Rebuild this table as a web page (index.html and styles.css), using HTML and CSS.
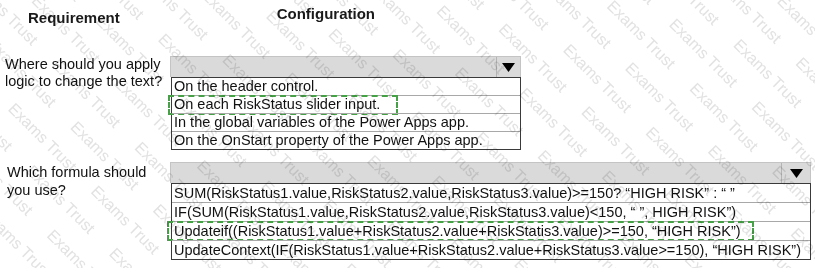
FILE: index.html
```html
<!DOCTYPE html>
<html lang="en">
<head>
<meta charset="utf-8">
<title>Requirement / Configuration</title>
<link rel="stylesheet" href="styles.css">
</head>
<body>
<div class="sheet">
  <div class="head">
    <div class="h-req">Requirement</div>
    <div class="h-conf">Configuration</div>
  </div>

  <div class="q q-first">
    <div class="label label-first">Where should you apply<br>logic to change the text?</div>
    <div class="dd dd-short">
      <div class="dd-bar">
        <span class="dd-btn">
          <svg width="13" height="9" viewBox="0 0 13 9"><polygon points="0,0 13,0 6.5,9" fill="#000"/></svg>
        </span>
      </div>
      <ul class="dd-list">
        <li>On the header control.</li>
        <li class="pick pick-a">On each RiskStatus slider input.</li>
        <li>In the global variables of the Power Apps app.</li>
        <li>On the OnStart property of the Power Apps app.</li>
      </ul>
    </div>
  </div>

  <div class="q q-second">
    <div class="label label-second">Which formula should<br>you use?</div>
    <div class="dd dd-wide">
      <div class="dd-bar">
        <span class="dd-btn dd-btn-wide">
          <svg width="13" height="9" viewBox="0 0 13 9"><polygon points="0,0 13,0 6.5,9" fill="#000"/></svg>
        </span>
      </div>
      <ul class="dd-list dd-list-tall">
        <li>SUM(RiskStatus1.value,RiskStatus2.value,RiskStatus3.value)&gt;=150? “HIGH RISK” : “ ”</li>
        <li>IF(SUM(RiskStatus1.value,RiskStatus2.value,RiskStatus3.value)&lt;150, “ ”, HIGH RISK”)</li>
        <li class="pick pick-b">Updateif((RiskStatus1.value+RiskStatus2.value+RiskStatis3.value)&gt;=150, “HIGH RISK”)</li>
        <li>UpdateContext(IF(RiskStatus1.value+RiskStatus2.value+RiskStatus3.value&gt;=150), “HIGH RISK”)</li>
      </ul>
    </div>
  </div>

  <div class="wm" aria-hidden="true"><div class="wm-inner"></div></div>
</div>
<script src="script.js"></script>
</body>
</html>
```

FILE: styles.css
```css
html, body {
  margin: 0;
  padding: 0;
  background: #fff;
}

.sheet {
  position: relative;
  width: 815px;
  height: 268px;
  overflow: hidden;
  font-family: "Liberation Sans", Arial, sans-serif;
  font-size: 14.5px;
  color: #111;
}

/* column headings */
.head {
  display: flex;
  height: 56px;
  font-weight: bold;
  font-size: 15px;
  line-height: 16px;
  color: #1a1a1a;
}
.h-req {
  margin: 10px 0 0 28px;
}
.h-conf {
  margin: 6px 0 0 157px;
}

/* question rows */
.q {
  display: flex;
  align-items: flex-start;
}
.q-second {
  margin-top: 12px;
}

.label {
  width: 170px;
  flex: none;
}
.label-first {
  line-height: 17px;
  padding-left: 5px;
  width: 165px;
}
.label-second {
  line-height: 18px;
  padding: 1px 0 0 7px;
  width: 163px;
}

/* dropdown */
.dd-short {
  width: 351px;
}
.dd-wide {
  width: 641px;
}

.dd-bar {
  height: 21px;
  box-sizing: border-box;
  background: #dadada;
  border: 1px solid #c4c4c4;
  border-bottom: none;
  display: flex;
  justify-content: flex-end;
}
.dd-btn {
  width: 23px;
  border-left: 1px solid #b4b4b4;
  display: flex;
  align-items: center;
  justify-content: center;
}
.dd-btn-wide {
  width: 28px;
}

.dd-list {
  list-style: none;
  margin: 0 0 0 1px;
  padding: 0;
  border: 1px solid #3a3a3a;
  background: #fff;
}
.dd-list li {
  position: relative;
  height: 17px;
  line-height: 17px;
  padding-left: 2px;
  white-space: nowrap;
  border-top: 1px solid #a8a8a8;
}
.dd-list li:first-child {
  border-top: none;
}
.dd-list-tall li {
  height: 18px;
  line-height: 18px;
}

/* dashed mark around the chosen answer */
.pick::after {
  content: "";
  position: absolute;
  top: -1px;
  box-sizing: border-box;
  border: 2px dashed #46a046;
}
.pick-a::after {
  left: -4px;
  width: 230px;
  height: 20px;
}
.pick-b::after {
  left: -5px;
  width: 587px;
  height: 20px;
}

/* diagonal watermark */
.wm {
  position: absolute;
  inset: 0;
  overflow: hidden;
  pointer-events: none;
  mix-blend-mode: multiply;
}
.wm-inner {
  position: absolute;
  left: -600px;
  top: -700px;
  width: 2000px;
  transform: rotate(45deg);
  transform-origin: center;
  font-family: "Liberation Sans", Arial, sans-serif;
  font-size: 16px;
  color: #e2e2e2;
}
.wm-line {
  height: 31px;
  line-height: 31px;
  white-space: nowrap;
}
.wm-line span {
  margin-right: 28px;
}
```

FILE: script.js
```js
// fills the diagonal watermark with repeated lines of text
(function () {
  var inner = document.querySelector('.wm-inner');
  for (var i = 0; i < 70; i++) {
    var line = document.createElement('div');
    line.className = 'wm-line';
    line.style.paddingLeft = ((i % 2) * 60) + 'px';
    for (var j = 0; j < 18; j++) {
      var s = document.createElement('span');
      s.textContent = 'Exams Trust';
      line.appendChild(s);
    }
    inner.appendChild(line);
  }
})();
```
